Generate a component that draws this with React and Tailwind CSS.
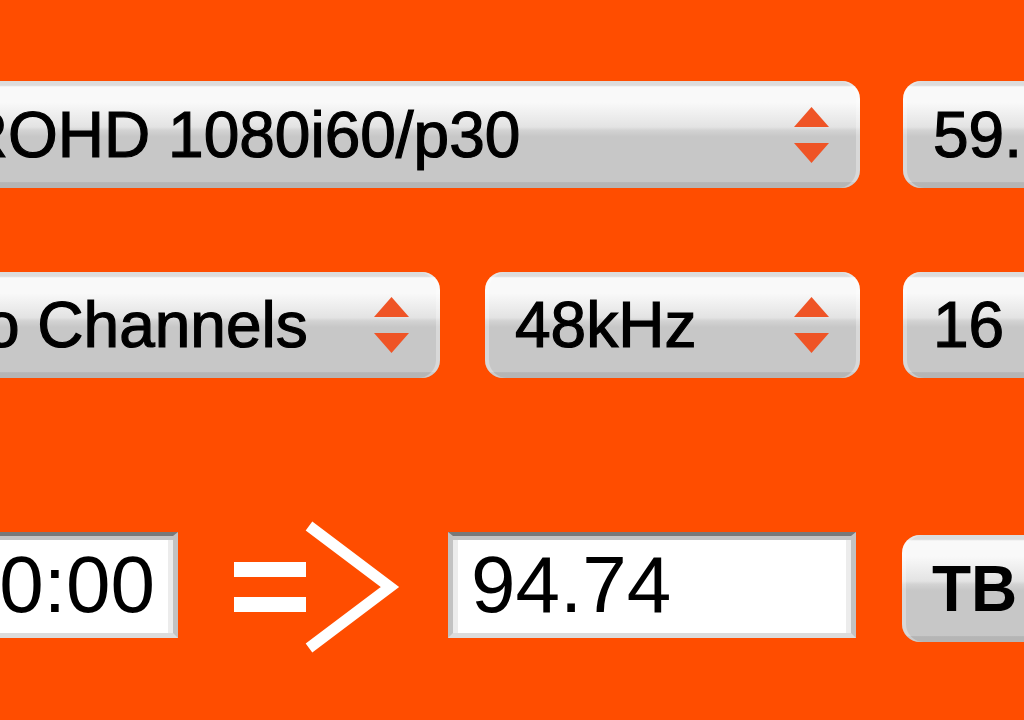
import React from 'react';

const face = "font-['Liberation_Sans',Arial,sans-serif]";

function Arrows() {
  return (
    <svg width="36" height="56" viewBox="0 0 36 56" className="shrink-0">
      <polygon points="0,20 17.5,0 35,20" fill="#ef5426" />
      <polygon points="0,36 35,36 17.5,56" fill="#ef5426" />
    </svg>
  );
}

function PopUp({ label, className = '', arrows = true, bold = false }) {
  return (
    <div
      className={`flex items-center justify-between shrink-0 pl-[30px] pr-[30px] rounded-[18px] bg-[linear-gradient(to_bottom,#dcdcdc_0%,#dcdcdc_4%,#f9f9f9_5.5%,#f9f9f9_20%,#e3e3e3_43%,#d3d3d3_46%,#c7c7c7_52%,#c7c7c7_94%,#b5b5b5_95%,#b5b5b5_100%)] shadow-[inset_4px_0_0_rgba(255,255,255,0.3),inset_-4px_0_0_rgba(255,255,255,0.3)] ${className}`}
    >
      <span
        className={`whitespace-nowrap text-[64px] leading-none text-black ${bold ? 'font-bold' : '[-webkit-text-stroke:1.2px_black]'}`}
      >
        {label}
      </span>
      {arrows && <Arrows />}
    </div>
  );
}

function Field({ value, className = '', right = false }) {
  return (
    <div
      className={`flex items-center shrink-0 h-[106px] bg-white border-t-4 border-t-[#797979] border-x-[5px] border-x-[#c2c2c2] border-b-[5px] border-b-[#dcdcdc] shadow-[inset_0_4px_0_#c4c4c4,inset_5px_0_0_#ececec,inset_-5px_0_0_#ececec] ${right ? 'justify-end pr-[18px]' : 'pl-[18px]'} ${className}`}
    >
      <span className="whitespace-nowrap text-[80px] leading-none text-black">{value}</span>
    </div>
  );
}

function Leads() {
  return (
    <svg width="166" height="140" viewBox="0 0 166 140" className="shrink-0 mt-[-12px] ml-[56px] mr-[48px]">
      <rect x="0" y="42" width="72" height="15" fill="#ffffff" />
      <rect x="0" y="77" width="72" height="15" fill="#ffffff" />
      <polyline points="75,6 156,67 75,128" fill="none" stroke="#ffffff" strokeWidth="11" strokeLinejoin="miter" />
    </svg>
  );
}

export default function App() {
  return (
    <div className={`h-[720px] w-full overflow-hidden bg-[#ff4d00] pt-[81px] ${face}`}>
      {/* video format */}
      <div className="flex items-start">
        <PopUp label="DVCPROHD 1080i60/p30" className="h-[107px] w-[1106px] ml-[-246px]" />
        <PopUp label="59.94 fps" className="h-[107px] w-[300px] ml-[43px]" />
      </div>

      {/* audio */}
      <div className="flex items-start mt-[84px]">
        <PopUp label="Stereo Channels" className="h-[106px] w-[639px] ml-[-199px]" />
        <PopUp label="48kHz" className="h-[106px] w-[375px] ml-[45px]" />
        <PopUp label="16 bit" className="h-[106px] w-[300px] ml-[43px]" />
      </div>

      {/* duration => size */}
      <div className="flex items-start mt-[154px]">
        <Field value="00:00:10:00" right className="w-[420px] ml-[-242px]" />
        <Leads />
        <Field value="94.74" className="w-[408px]" />
        <PopUp label="TB" bold arrows={false} className="h-[107px] w-[300px] ml-[46px] mt-[3px]" />
      </div>
    </div>
  );
}
